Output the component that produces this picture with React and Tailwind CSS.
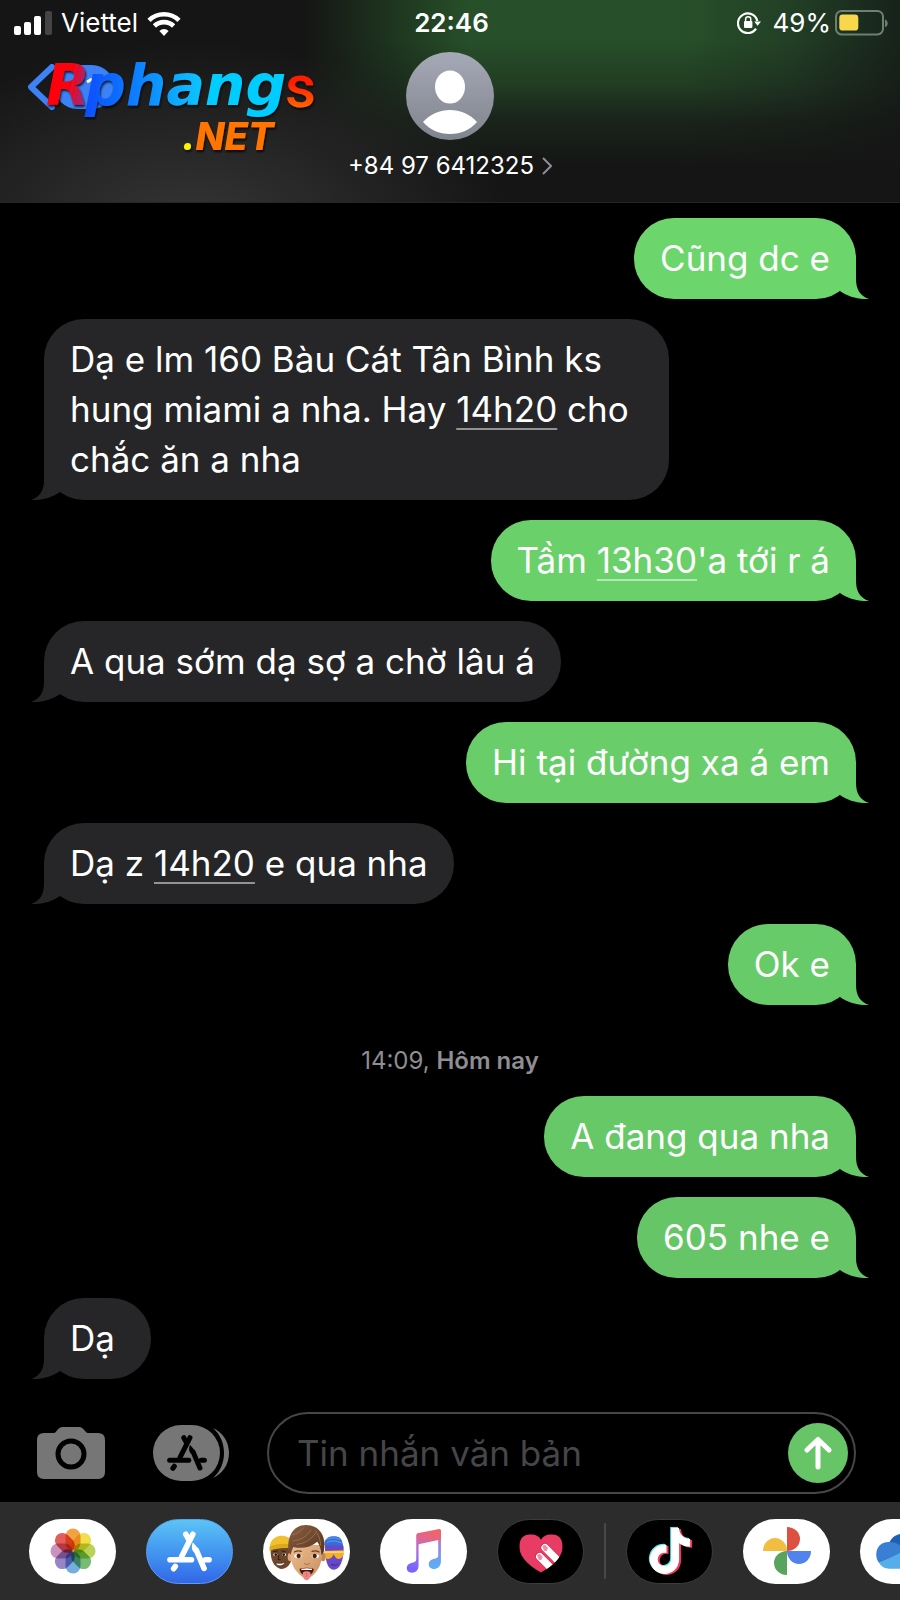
import React from "react";
import { FaTiktok } from "react-icons/fa";

function Signal() {
  return (
    <svg viewBox="0 0 38 24" className="h-6 w-[38px]" aria-hidden="true">
      <rect x="0" y="15" width="7" height="9" rx="2" fill="#fff" />
      <rect x="10" y="11" width="7" height="13" rx="2" fill="#fff" />
      <rect x="20" y="5" width="7" height="19" rx="2" fill="#fff" />
      <rect x="31" y="0" width="7" height="24" rx="2" fill="#444" />
    </svg>
  );
}

function Wifi() {
  return (
    <svg viewBox="0 0 34 25" className="h-[25px] w-[34px]" aria-hidden="true">
      <g fill="none" stroke="#fff" strokeWidth="4.6">
        <path d="M2 9.3a21.5 21.5 0 0 1 30 0" />
        <path d="M7.4 15a13.8 13.8 0 0 1 19.2 0" />
      </g>
      <path d="M17 25l-4.6-5a6.5 6.5 0 0 1 9.2 0z" fill="#fff" />
    </svg>
  );
}

function RotationLock() {
  return (
    <svg viewBox="0 0 24 22" className="h-[22px] w-6" aria-hidden="true">
      <path d="M20.3 9A9.8 9.8 0 1 0 19 16.6" fill="none" stroke="#fff" strokeWidth="2.2" />
      <path d="M17.2 9.4H24l-3.400 4.4z" fill="#fff" />
      <rect x="7" y="9" width="8.4" height="7" rx="1" fill="#fff" />
      <path d="M8.600 9V7.400a2.600 2.600 0 0 1 5.200 0V9" fill="none" stroke="#fff" strokeWidth="1.4" />
    </svg>
  );
}

function Battery() {
  return (
    <svg viewBox="0 0 54 26" className="h-[26px] w-[54px]" aria-hidden="true">
      <rect x="1" y="1" width="47" height="23.4" rx="5.5" fill="none" stroke="#6f7f71" strokeWidth="2" />
      <rect x="4.3" y="4.6" width="19" height="16" rx="3.4" fill="#f8d74a" />
      <path d="M50 9.400c3.600 1 3.600 6.800 0 7.800z" fill="#6f7f71" />
    </svg>
  );
}

function SiteLogo() {
  return (
    <svg viewBox="0 -30 320 140" className="pointer-events-none absolute left-5 top-7 h-[140px] w-80" aria-label="Rphangs.NET">
      <defs>
        <linearGradient id="lg-r" x1="0" y1="0" x2="1" y2="0.3">
          <stop offset="0.6" stopColor="#ff0008" />
          <stop offset="1" stopColor="#9b2a80" />
        </linearGradient>
        <linearGradient id="lg-p" gradientUnits="userSpaceOnUse" x1="64" y1="0" x2="190" y2="0">
          <stop offset="0" stopColor="#0a4cff" />
          <stop offset="0.4" stopColor="#0c7dff" />
          <stop offset="1" stopColor="#06cdff" />
        </linearGradient>
        <linearGradient id="lg-s" x1="0" y1="0.3" x2="0" y2="1">
          <stop offset="0.2" stopColor="#ff1a00" />
          <stop offset="0.8" stopColor="#ff7300" />
        </linearGradient>
        <filter id="lg-sh" x="-10%" y="-10%" width="120%" height="130%">
          <feDropShadow dx="1" dy="2" stdDeviation="0.8" floodColor="#000" floodOpacity="0.8" />
        </filter>
      </defs>
      <g filter="url(#lg-sh)" fontFamily="'DejaVu Sans', sans-serif" fontWeight="700" fontStyle="italic">
        <text x="26" y="47" fontSize="57" fill="url(#lg-r)">R</text>
        <text x="65" y="47" fontSize="57" fill="url(#lg-p)">phang</text>
        <text x="265" y="49" fontSize="60" fontFamily="Roboto, sans-serif" fontWeight="500" fontStyle="normal" fill="url(#lg-s)">s</text>
        <text x="162" y="92" fontSize="38" fontFamily="Inter, sans-serif" fontWeight="800" fill="#ff7505">
          <tspan fill="#fff200">.</tspan>NET
        </text>
      </g>
    </svg>
  );
}

function StoreGlyph({ className }) {
  return (
    <svg viewBox="0 0 136 122" className={className} aria-hidden="true">
      <g stroke="currentColor" strokeWidth="17" strokeLinecap="round" fill="none">
        <path d="M78 9L44 77" />
        <path d="M57 9L67 27" />
        <path d="M9 86H74" />
        <path d="M116 86H127" />
        <path d="M89 58L112 112" />
        <path d="M25 106L20 113" />
      </g>
      <path d="M78 33L97 55L82 64C74 56 73 46 78 33z" fill="currentColor" />
    </svg>
  );
}

function PhotosIcon() {
  const petals = ["#f19a37", "#f1dc3c", "#b4cf4c", "#6cb66c", "#6ba7dc", "#8f7cc0", "#c58bb8", "#e0524f"];
  return (
    <svg viewBox="-23 -23 46 46" className="size-[46px] isolate" aria-hidden="true">
      {petals.map((c, i) => (
        <rect key={c} x="-7.500" y="-22.500" width="15" height="22" rx="7.500" fill={c} opacity="0.93" transform={`rotate(${i * 45})`} className="mix-blend-multiply" />
      ))}
    </svg>
  );
}

function MemojiIcon() {
  return (
    <svg viewBox="0 0 261 195" className="h-[65px] w-[87px]" aria-hidden="true">
      <defs>
        <linearGradient id="mm-skin" x1="0" y1="0" x2="1" y2="1">
          <stop offset="0" stopColor="#edbd90" />
          <stop offset="1" stopColor="#c98f60" />
        </linearGradient>
        <linearGradient id="mm-hair" x1="0" y1="0" x2="1" y2="1">
          <stop offset="0" stopColor="#8c6042" />
          <stop offset="1" stopColor="#54331f" />
        </linearGradient>
      </defs>
      <path d="M24 84c-4 28 4 62 32 66c20 0 34-24 34-50V80z" fill="#6d462b" />
      <path d="M20 92c-2-26 14-42 36-42c16 0 26 8 28 14v20c-20-2-40-2-64 8z" fill="#f0c030" />
      <path d="M20 84c18-10 42-12 64-8v12c-22-2-46 0-64 8z" fill="#dca91e" />
      <ellipse cx="37" cy="107" rx="6" ry="4" fill="#fff" /><circle cx="38" cy="107" r="4" fill="#21150e" />
      <ellipse cx="63" cy="107" rx="6" ry="4" fill="#fff" /><circle cx="62" cy="107" r="4" fill="#21150e" />
      <path d="M30 98l14-2M56 96l12 2M48 108l-3 14h8" stroke="#341e12" strokeWidth="3" fill="none" />
      <path d="M38 131c10 3 20 3 28-2c-3 14-24 16-28 2z" fill="#fff" stroke="#3b2012" strokeWidth="2" />
      <path d="M186 78c0 44 6 74 26 74s30-28 30-68l-8-22h-46z" fill="#6749c8" />
      <path d="M184 78c0-22 16-28 34-26c16 2 22 14 20 28z" fill="#356ed6" />
      <path d="M190 62c12-6 28-8 42 0M192 70c12-6 28-6 44 2" stroke="#60a0f4" strokeWidth="3" fill="none" />
      <path d="M184 96l59-2c0 16-6 26-16 26c-8 0-12-8-15-14c-4 10-10 14-18 14c-8-2-10-12-10-24z" fill="#f5ad2c" />
      <path d="M184 97h59v5h-59z" fill="#ffd46b" />
      <path d="M204 136c8 4 16 4 22-2" stroke="#3d2596" strokeWidth="3" fill="none" />
      <ellipse cx="82" cy="114" rx="8" ry="13" fill="#dda779" />
      <ellipse cx="180" cy="114" rx="8" ry="13" fill="#bf8759" />
      <path d="M84 78c-4 34 0 62 18 80c10 12 20 20 29 20s22-10 30-22c15-18 18-44 15-78z" fill="url(#mm-skin)" />
      <path d="M77 98c-6-42 12-80 52-80c40 0 64 34 53 82l-7 8c0-16-4-28-12-40c-22 18-46 22-72 16c-4 8-6 14-8 24z" fill="url(#mm-hair)" />
      <path d="M90 66c22-2 42-14 54-34M100 76c24-2 44-14 58-34M88 48c14-4 24-10 34-22M156 34c12 14 16 30 17 46" stroke="#a57752" strokeWidth="2.5" fill="none" />
      <path d="M94 99c8-4 14-4 21-2M147 97c7-2 14-2 21 2" stroke="#684027" strokeWidth="4" fill="none" strokeLinecap="round" />
      <ellipse cx="105" cy="111" rx="11" ry="6" fill="#fff" /><circle cx="107" cy="111" r="6.5" fill="#372116" />
      <ellipse cx="157" cy="111" rx="11" ry="6" fill="#fff" /><circle cx="155" cy="111" r="6.5" fill="#372116" />
      <path d="M125 133c4 4 10 4 14 0" stroke="#b3764b" strokeWidth="3.5" fill="none" strokeLinecap="round" />
      <path d="M110 149c14-4 28-4 42 0c0 12-8 20-21 20s-21-8-21-20z" fill="#51150f" />
      <path d="M115 149c11-2 22-2 32 0v4h-32z" fill="#fff" />
      <path d="M120 160c6-4 16-4 22 0c2 12-2 24-11 24s-13-12-11-24z" fill="#ee8583" />
      <path d="M131 161v13" stroke="#c95f66" strokeWidth="2" />
    </svg>
  );
}

function MusicIcon() {
  return (
    <svg viewBox="0 0 104 130" className="h-11 w-9" aria-hidden="true">
      <defs>
        <linearGradient id="ms-a" x1="0.8" y1="0" x2="0.4" y2="1">
          <stop offset="0" stopColor="#ef6464" />
          <stop offset="0.3" stopColor="#e16590" />
          <stop offset="0.6" stopColor="#a972e6" />
          <stop offset="1" stopColor="#7963ff" />
        </linearGradient>
        <linearGradient id="ms-b" x1="0" y1="0" x2="0" y2="1">
          <stop offset="0" stopColor="#df6689" />
          <stop offset="0.5" stopColor="#8e8be6" />
          <stop offset="1" stopColor="#53b4f5" />
        </linearGradient>
      </defs>
      <path d="M93 1c7-2 9 1 9 6v88c0 16-10 23-22 23c-8 0-14-5-14-13c0-10 7-15 17-17c9-2 11-4 11-11V32z" fill="url(#ms-b)" />
      <path d="M94 1c7-2 8 2 8 6v24L39 44c-2 0-3 2-3 4v59c0 14-8 22-20 22c-9 0-15-5-15-13c0-9 7-14 16-16c9-2 12-4 12-11V21c0-6 2-8 7-9z" fill="url(#ms-a)" />
    </svg>
  );
}

function HeartIcon() {
  return (
    <svg viewBox="0 -14 132 132" className="size-11" aria-hidden="true">
      <defs>
        <clipPath id="heart-clip">
          <path d="M66 117C42 102 1 77 1 38C1 15 15 2 35 2c14 0 25 6 31 16C72 8 83 2 97 2c20 0 34 13 34 36c0 39-41 64-65 79z" />
        </clipPath>
      </defs>
      <g clipPath="url(#heart-clip)">
        <path d="M0 0h132v118H0z" fill="#e83c64" />
        <g strokeLinecap="round" fill="none">
          <path d="M77 41l60 60M61 68l60 60" stroke="#bb2649" strokeWidth="25" />
          <path d="M78 42l60 60M62 69l60 60" stroke="#fff" strokeWidth="22" />
        </g>
        <path d="M70 37l8-4 9 10-4 9-8-1zM54 64l8-4 9 10-4 9-8-1z" fill="#f58ba4" />
      </g>
    </svg>
  );
}

function TikTokIcon() {
  return (
    <span className="relative block size-12 text-[46px]">
      <FaTiktok className="absolute left-0 top-0 text-[#5eeaea]" />
      <FaTiktok className="absolute left-[3px] top-[2px] text-[#f03a5c]" />
      <FaTiktok className="absolute left-[1px] top-[1px] text-white" />
    </span>
  );
}

function GooglePhotosIcon() {
  return (
    <svg viewBox="0 0 144 144" className="size-12" aria-hidden="true">
      <path d="M72 0a39 36 0 0 1 0 72z" fill="#dc5140" />
      <path d="M72 72H144a36 39 0 0 1-72 0z" fill="#5182ee" />
      <path d="M72 72v72a39 36 0 0 1 0-72z" fill="#59a45c" />
      <path d="M72 72H0a36 39 0 0 1 72 0z" fill="#f2be42" />
    </svg>
  );
}

function CloudIcon() {
  return (
    <svg viewBox="0 0 168 112" className="h-[37px] w-14" aria-hidden="true">
      <path d="M38 32C46 12 62 2 82 2c26 0 44 18 48 40l-50 30z" fill="#1e60b4" />
      <path d="M38 27c-26 0-38 18-38 38c0 12 4 20 9 26l84-36C78 38 60 27 38 27z" fill="#397fd3" />
      <path d="M72 64l48-24c28-4 48 14 48 36c0 20-14 32-34 32z" fill="#4aa6e8" />
      <path d="M9 91c7 12 18 17 30 17h98l-60-50z" fill="#55aee9" />
    </svg>
  );
}

function Tail({ mine }) {
  return mine ? (
    <svg viewBox="0 0 29 40" className="absolute -right-[13px] bottom-0 h-10 w-[29px] fill-current" aria-hidden="true">
      <path d="M16 0V20C16 30 20 37 29 40C19 40.500 8 38 0 32V0z" />
    </svg>
  ) : (
    <svg viewBox="0 0 29 40" className="absolute -left-[13px] bottom-0 h-10 w-[29px] fill-current" aria-hidden="true">
      <path d="M13 0V20C13 30 9 37 0 40C10 40.500 21 38 29 32V0z" />
    </svg>
  );
}

function Bubble({ mine, tone = "bg-[#262628] text-[#262628]", children }) {
  return (
    <li className={mine ? "flex justify-end" : "flex justify-start"}>
      <div className={`relative min-w-[107px] max-w-[77%] rounded-[40px] px-[26px] pb-4 pt-[15px] ${tone}`}>
        <Tail mine={mine} />
        <p className="relative text-[35px] leading-[50px] text-white">{children}</p>
      </div>
    </li>
  );
}

function Time({ children }) {
  return (
    <a href="#" className="underline decoration-white/50 decoration-2 underline-offset-[6px] [text-decoration-skip-ink:none]">
      {children}
    </a>
  );
}

function AppPill({ label, className, children }) {
  return (
    <button type="button" aria-label={label} className={`flex h-[65px] w-[87px] shrink-0 items-center justify-center overflow-hidden rounded-[36px] ${className}`}>
      {children}
    </button>
  );
}

export default function App() {
  return (
    <div className="flex min-h-screen flex-col overflow-hidden bg-black font-['Inter','Noto_Sans',sans-serif] text-white">
      <header className="relative flex h-[203px] flex-col border-b border-[#252525] bg-[#151515] bg-[radial-gradient(ellipse_36%_95%_at_21%_115%,#363636_0%,#36363600_100%),linear-gradient(to_bottom,#15151500_20%,#15151550_42%,#151515c0_60%,#151515_82%),linear-gradient(to_right,#151515_34%,#1c301d_42%,#274f29_52%,#274f29_76%,#223f25_88%,#17221a_100%)]">
        <div className="grid h-[46px] grid-cols-[1fr_auto_1fr] items-center pl-[14px] pr-[11px] text-[26px] leading-none">
          <div className="flex items-center gap-[9px]">
            <Signal />
            <span>Viettel</span>
            <Wifi />
          </div>
          <time className="font-semibold">22:46</time>
          <div className="flex items-center justify-end gap-1">
            <RotationLock />
            <span className="pl-2">49%</span>
            <Battery />
          </div>
        </div>
        <div className="grid grid-cols-[1fr_auto_1fr] items-start pt-[6px]">
          <button type="button" aria-label="Back" className="ml-7 mt-3 flex w-fit items-center">
            <svg viewBox="0 0 88 46" className="h-[46px] w-[88px]" aria-hidden="true">
              <path d="M24 3L3 23L24 43" fill="none" stroke="#3c82f6" strokeWidth="6" strokeLinecap="round" strokeLinejoin="round" />
              <rect x="27" y="1" width="59" height="44" rx="22" fill="#3c82f6" />
              <path d="M45 17v12M59 18l5-3" fill="none" stroke="#fff" strokeWidth="3" />
            </svg>
          </button>
          <div className="flex flex-col items-center gap-3">
            <svg viewBox="0 0 88 88" className="size-[88px]" aria-hidden="true">
              <defs>
                <linearGradient id="av" x1="0" y1="0" x2="0" y2="1">
                  <stop offset="0" stopColor="#a6a9b6" />
                  <stop offset="1" stopColor="#80848e" />
                </linearGradient>
              </defs>
              <circle cx="44" cy="44" r="44" fill="url(#av)" />
              <ellipse cx="44" cy="35" rx="15" ry="16.5" fill="#fff" />
              <path d="M17 70C24 62 34 58 44 58s20 4 27 12C64 78 55 82 44 82S24 78 17 70z" fill="#fff" />
            </svg>
            <a href="#" className="flex items-center gap-2 text-2xl leading-7">
              +84 97 6412325
              <svg viewBox="0 0 10 18" className="h-[18px] w-[10px]" fill="none" stroke="#8b8e95" strokeWidth="2" aria-hidden="true">
                <path d="M1 1l8 8-8 8" />
              </svg>
            </a>
          </div>
          <span />
        </div>
        <SiteLogo />
      </header>

      <main className="flex-1 px-11 pb-5 pt-[15px]">
        <ul className="flex flex-col gap-5">
          <Bubble mine tone="bg-[#6cd66c] text-[#6cd66c]">Cũng dc e</Bubble>
          <Bubble>
            Dạ e lm 160 Bàu Cát Tân Bình ks hung miami a nha. Hay <Time>14h20</Time> cho chắc ăn a nha
          </Bubble>
          <Bubble mine tone="bg-[#6ad16a] text-[#6ad16a]">
            Tầm <Time>13h30</Time>'a tới r á
          </Bubble>
          <Bubble>A qua sớm dạ sợ a chờ lâu á</Bubble>
          <Bubble mine tone="bg-[#69ce69] text-[#69ce69]">Hi tại đường xa á em</Bubble>
          <Bubble>
            Dạ z <Time>14h20</Time> e qua nha
          </Bubble>
          <Bubble mine tone="bg-[#68cb69] text-[#68cb69]">Ok e</Bubble>
          <li className="flex h-[51px] items-center justify-center pt-5 text-2xl leading-none text-[#8e8e93]">
            <span className="whitespace-pre">14:09, </span>
            <strong className="font-semibold">Hôm nay</strong>
          </li>
          <Bubble mine tone="bg-[#67c868] text-[#67c868]">A đang qua nha</Bubble>
          <Bubble mine tone="bg-[#66c667] text-[#66c667]">605 nhe e</Bubble>
          <Bubble>Dạ</Bubble>
        </ul>
      </main>

      <form className="flex items-center pb-2 pl-[37px] pr-11" onSubmit={(e) => e.preventDefault()}>
        <button type="button" aria-label="Camera" className="shrink-0">
          <svg viewBox="0 0 68 52" className="h-[52px] w-[68px]" aria-hidden="true">
            <path d="M7 6H17C20 6 20 0 26 0H42C47 0 48 6 51 6H61Q68 6 68 13V45Q68 52 61 52H7Q0 52 0 45V13Q0 6 7 6z" fill="#767676" />
            <circle cx="34" cy="27" r="13" fill="none" stroke="#000" strokeWidth="5" />
          </svg>
        </button>
        <button type="button" aria-label="Apps" className="ml-12 flex h-14 shrink-0 items-center">
          <span className="flex h-14 w-[67px] items-center justify-center rounded-[28px] bg-[#767676] text-black">
            <StoreGlyph className="h-9 w-10" />
          </span>
          <svg viewBox="0 0 16 52" className="-ml-[7px] h-[52px] w-4" aria-hidden="true">
            <path d="M0 1C9 5 16 14 16 26S9 47 0 51C7 45 11 36 11 26S7 7 0 1z" fill="#767676" />
          </svg>
        </button>
        <div className="ml-[38px] flex h-[82px] min-w-0 flex-1 items-center rounded-[41px] border-2 border-[#464646] pl-7 pr-[6px]">
          <input type="text" aria-label="Tin nhắn văn bản" placeholder="Tin nhắn văn bản" className="h-full min-w-0 flex-1 bg-transparent text-[35px] text-white outline-none placeholder:text-[#464648]" />
          <button type="submit" aria-label="Send" className="flex size-[60px] shrink-0 items-center justify-center rounded-full bg-[#67c568]">
            <svg viewBox="0 0 28 34" className="h-[34px] w-7" fill="none" stroke="#fff" strokeWidth="5" strokeLinecap="round" strokeLinejoin="round" aria-hidden="true">
              <path d="M14 31V4M3 14L14 3.500L25 14" />
            </svg>
          </button>
        </div>
      </form>

      <nav className="flex h-[98px] items-center gap-5 overflow-hidden bg-[#2c2c2c] pl-[29px]">
        <div className="flex gap-[30px]">
          <AppPill label="Photos" className="bg-white">
            <PhotosIcon />
          </AppPill>
          <AppPill label="App Store" className="border border-[#5a9ff0] bg-linear-to-b from-[#5cc4f5] to-[#3466e8]">
            <StoreGlyph className="h-[41px] w-[45px]" />
          </AppPill>
          <AppPill label="Memoji" className="bg-white">
            <MemojiIcon />
          </AppPill>
          <AppPill label="Music" className="bg-white">
            <MusicIcon />
          </AppPill>
          <AppPill label="Digital Touch" className="border border-[#3c3c3c] bg-black">
            <HeartIcon />
          </AppPill>
        </div>
        <div className="h-14 w-[2px] shrink-0 rounded-full bg-[#48484a]" />
        <div className="flex gap-[30px]">
          <AppPill label="TikTok" className="border border-[#3c3c3c] bg-black">
            <TikTokIcon />
          </AppPill>
          <AppPill label="Google Photos" className="bg-white">
            <GooglePhotosIcon />
          </AppPill>
          <AppPill label="OneDrive" className="bg-white">
            <CloudIcon />
          </AppPill>
        </div>
      </nav>
    </div>
  );
}
